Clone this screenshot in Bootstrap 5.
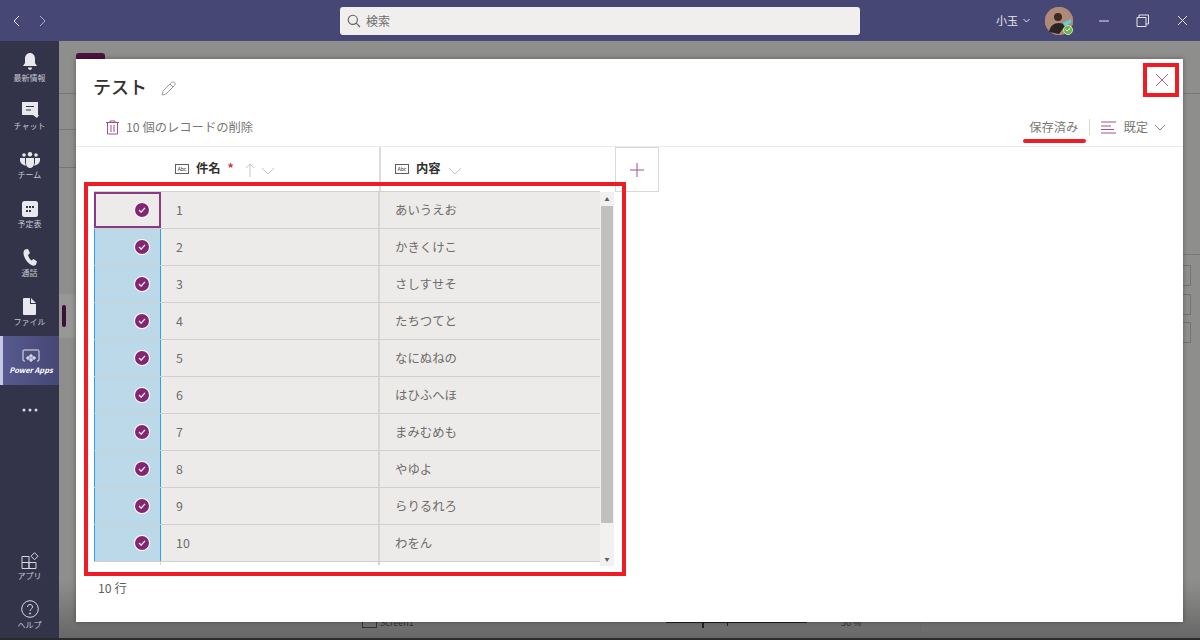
<!DOCTYPE html>
<html lang="ja">
<head>
    <meta charset="UTF-8">
    <title>テスト</title>
    <link rel="stylesheet" href="https://cdn.jsdelivr.net/npm/bootstrap@5.3.0/dist/css/bootstrap.min.css">
    <style>
        html, body { height: 640px; overflow: hidden; }
        body { font-family: "Noto Sans CJK JP", "Noto Sans", sans-serif; font-size: 12px; color: #605e5c; position: relative; background: #8a8a89; }
        .topbar { height: 41px; background: #464775; color: #e6e6ef; }
        .nav-arrows { width: 59px; padding-left: 12px; gap: 15px; }
        .search-wrap { width: 520px; height: 28px; margin-left: 281px; background: #f0efee; border-radius: 3px; padding-left: 7px; color: #6f6e6c; font-size: 12px; gap: 5px; }
        .user { margin-left: auto; gap: 5px; font-size: 11px; }
        .avatar { width: 28px; height: 28px; border-radius: 50%; position: relative; background: #a98674; margin-left: 10px; margin-right: 25px; }
        .presence { position: absolute; right: 0; bottom: 0; width: 10px; height: 10px; border-radius: 50%; background: #6bb74a; border: 1px solid #cfe5b0; }
        .win-btns { gap: 28px; padding-right: 12px; }
        .win-min { margin-right: -2px; }
        .sidebar { width: 59px; background: #33344a; padding-top: 1px; color: #c8c8d2; }
        .rail { height: 49px; padding-top: 2px; font-size: 8px; line-height: 10px; gap: 2px; }
        .rail.active { background: linear-gradient(90deg, #565a8e, #464775); border-left: 3px solid #c5c7e6; color: #fff; font-style: italic; font-weight: 600; font-size: 7.500px; }
        .rail-dots { height: 50px; color: #d8d8e0; }
        .rail-apps { margin-bottom: -1px; }
        .rail-help { margin-bottom: 2px; }
        .behind { background: linear-gradient(#8e8e8c 90%, #666); position: relative; }
        .back-tab { position: absolute; left: 76px; top: 53px; width: 29px; height: 8px; background: #4a1340; border-radius: 3px 3px 0 0; }
        .back-mark { position: absolute; left: 62px; top: 305px; width: 4px; height: 22px; background: #3e1036; border-radius: 2px; }
        .back-row { position: absolute; left: 59px; top: 294px; width: 17px; height: 44px; background: #979796; }
        .back-hline { position: absolute; left: 59px; width: 17px; height: 1px; background: #777; }
        .back-box { position: absolute; left: 1183px; width: 8px; height: 21px; border: 1px solid #737373; border-left: 0; }
        .back-foot { position: absolute; left: 59px; right: 0; top: 612px; height: 26px; color: #333; font-size: 9px; line-height: 12px; }
        .back-foot span { position: absolute; }
        .black-line { position: absolute; left: 0; right: 0; top: 638px; height: 2px; background: #2b2b2b; }
        .dialog { position: absolute; left: 76px; top: 59px; width: 1107px; height: 563px; background: #fff; box-shadow: 0 0 5px rgba(0,0,0,.35); }
        .dlg-title { height: 58px; padding: 14px 0 0 17px; font-size: 18px; font-weight: 500; color: #323130; gap: 14px; }
        .cmdbar { height: 20px; padding: 0 17px 0 30px; font-size: 12.300px; color: #797775; gap: 7px; }
        .saved { margin-left: auto; }
        .sep { width: 1px; height: 16px; background: #d8d8d8; margin: 0 4px; }
        .hdr { height: 46px; margin-top: 9px; border-top: 1px solid #edebe9; color: #323130; font-size: 12.300px; font-weight: 700; }
        .hdr-gutter { width: 85px; }
        .hdr-cell { gap: 7px; padding-top: 12px; align-items: flex-start; height: 44px; }
        .hdr-name { width: 220px; padding-left: 14px; border-right: 2px solid #dcdcdc; }
        .hdr-content { width: 234px; padding-left: 14px; }
        .add-col { width: 44px; height: 45px; border: 1px solid #d9d9d9; color: #a4508f; }
        .abc { width: 14px; height: 10px; margin-top: 5px; border: 1px solid #605e5c; font-size: 5px; line-height: 8px; text-align: center; font-weight: 400; }
        .req { color: #d13438; }
        .sort-down { margin-left: -1px; }
        .grid-wrap { margin: -1px 0 0 18px; width: 520px; position: relative; }
        .grid-body { width: 506px; }
        .g-row { height: 37px; background: #edebe9; border-top: 1px solid #d2d0ce; font-size: 12.400px; color: #6e6c6a; }
        .g-row.last { border-bottom: 1px solid #d2d0ce; height: 38px; }
        .g-check { width: 67px; height: 100%; background: #bcd9ea; border-left: 1px solid #2aa0f0; border-right: 1px solid #2aa0f0; padding-right: 11px; justify-content: flex-end; }
        .g-row.focus .g-check { background: #edebe9; border: 2px solid #8a3a82; padding-right: 10px; }
        .check { width: 14px; height: 14px; border-radius: 50%; background: #842472; box-shadow: 0 0 0 1px #fff; }
        .g-name { width: 219px; padding-left: 15px; height: 100%; border-right: 2px solid #d6d6d6; }
        .g-content { width: 220px; padding-left: 15px; }
        .g-tail { height: 3px; padding-left: 66px; }
        .g-tail span { width: 220px; border-left: 1px solid #d6d6d6; border-right: 2px solid #d6d6d6; }
        .scroll { position: absolute; left: 506px; top: 1px; width: 14px; height: 374px; background: #f1f1f1; }
        .thumb { height: 317px; width: 12px; background: #c0c0c0; margin: 0 auto; }
        .arrow { height: 14px; font-size: 5px; color: #606060; line-height: 14px; }
        .arrow-end { margin-top: 29px; }
        .dlg-foot { padding: 14px 0 0 22px; font-size: 12.300px; color: #605e5c; }
        .anno { position: absolute; border: 4px solid #ee1c25; }
        .anno-grid { left: 84px; top: 182px; width: 542px; height: 394px; }
        .anno-x { left: 1143px; top: 63px; width: 36px; height: 34px; }
        .anno-line { position: absolute; left: 1023px; top: 139px; width: 63px; height: 4px; background: #ee1c25; border-radius: 2px; }
        .x-btn { position: absolute; left: 1155px; top: 73px; }
    </style>
</head>
<body>
    <!-- タイトルバー -->
    <div class="topbar d-flex align-items-center">
        <div class="nav-arrows d-flex">
            <svg width="10" height="12" viewBox="0 0 10 12" fill="none" stroke="#e6e6ef"><path d="M7 1 2 6l5 5"/></svg>
            <svg width="10" height="12" viewBox="0 0 10 12" fill="none" stroke="#a9a9c8"><path d="M3 1l5 5-5 5"/></svg>
        </div>
        <div class="search-wrap d-flex align-items-center">
            <svg width="14" height="14" viewBox="0 0 14 14" fill="none" stroke="#605e5c" stroke-width="1.1"><circle cx="5.8" cy="5.8" r="4.6"/><path d="M9.2 9.2 13 13"/></svg>
            <span>検索</span>
        </div>
        <div class="user d-flex align-items-center">
            <span>小玉</span>
            <svg width="7" height="5" viewBox="0 0 7 5" fill="none" stroke="#e6e6ef"><path d="M.5 1l3 3 3-3"/></svg>
            <div class="avatar">
                <svg width="28" height="28" viewBox="0 0 28 28"><circle cx="14" cy="14" r="14" fill="#b08a78"/><path d="M4 25c1-6 5-9 10-9 3 0 5 1 6 3l-6 8z" fill="#2a2422"/><circle cx="13" cy="10" r="4" fill="#3a2a22"/><path d="M18 16l8-4v4l-7 3z" fill="#5fd0de"/></svg>
                <span class="presence d-flex align-items-center justify-content-center"><svg width="6" height="5" viewBox="0 0 6 5" fill="none" stroke="#fff"><path d="M.5 2.500l1.500 1.500L5.500 1"/></svg></span>
            </div>
        </div>
        <div class="win-btns d-flex align-items-center">
            <svg class="win-min" width="12" height="12" viewBox="0 0 12 12" stroke="#e6e6ef"><path d="M1 6h10"/></svg>
            <svg width="13" height="13" viewBox="0 0 13 13" fill="none" stroke="#e6e6ef"><path d="M1 3.500h9v9H1zM3 3.500V1h9.500v9H10"/></svg>
            <svg width="11" height="11" viewBox="0 0 11 11" stroke="#e6e6ef"><path d="M1 1l9 9M10 1l-9 9"/></svg>
        </div>
    </div>

    <div class="d-flex" style="height:599px">
        <!-- 左レール -->
        <div class="sidebar d-flex flex-column">
            <div class="rail d-flex flex-column align-items-center justify-content-center">
                <svg width="16" height="18" viewBox="0 0 16 18" fill="#e8e8ee"><path d="M8 0c3 0 5 2.500 5 6v4l2 3H1l2-3V6c0-3.500 2-6 5-6zM6 14.500h4c0 1.500-1 2.500-2 2.500s-2-1-2-2.500z"/></svg>
                <span>最新情報</span>
            </div>
            <div class="rail d-flex flex-column align-items-center justify-content-center">
                <svg width="18" height="17" viewBox="0 0 18 17"><path d="M1 0h16v13h1l-2 3-4-3H1z" fill="#e8e8ee"/><path d="M5 4.500h8M5 8h5" stroke="#33344a" stroke-width="1.200"/></svg>
                <span>チャット</span>
            </div>
            <div class="rail d-flex flex-column align-items-center justify-content-center">
                <svg width="20" height="16" viewBox="0 0 20 16" fill="#e8e8ee"><circle cx="10" cy="2.200" r="2.200"/><circle cx="4" cy="3" r="1.800"/><circle cx="16" cy="3" r="1.800"/><path d="M0 6h5v5l1 2.500C3 13.500 0 11 0 8zM20 6h-5v5l-1 2.500c3 0 6-2.500 6-5.500z"/><path d="M6 6h8v6c0 2-2 4-4 4s-4-2-4-4z"/></svg>
                <span>チーム</span>
            </div>
            <div class="rail d-flex flex-column align-items-center justify-content-center">
                <svg width="16" height="16" viewBox="0 0 16 16"><rect width="16" height="16" y="0" rx="2.500" fill="#e8e8ee"/><path d="M4 5h2v2H4zM7 5h2v2H7zM10 5h2v2h-2zM4 9h2v2H4zM7 9h2v2H7z" fill="#33344a"/></svg>
                <span>予定表</span>
            </div>
            <div class="rail d-flex flex-column align-items-center justify-content-center">
                <svg width="14" height="17" viewBox="0 0 14 17" fill="#e8e8ee"><path d="M2 .500 5 0l2 4-2 2c.5 2 2 4.500 3.500 5.500l2-1.500 3.500 2.500-1 3c-1 1.500-3 1.500-4.500.500C4 14 .5 8 .5 4 .5 2.500 1 1 2 .500z"/></svg>
                <span>通話</span>
            </div>
            <div class="rail d-flex flex-column align-items-center justify-content-center">
                <svg width="13" height="17" viewBox="0 0 13 17" fill="#e8e8ee"><path d="M1 0h6v6h6v10a1 1 0 0 1-1 1H1a1 1 0 0 1-1-1V1a1 1 0 0 1 1-1zM8 0l5 5H8z"/></svg>
                <span>ファイル</span>
            </div>
            <div class="rail active d-flex flex-column align-items-center justify-content-center">
                <svg width="18" height="14" viewBox="0 0 18 14" fill="none" stroke="#e8e8ee"><path d="M3 12H2a1 1 0 0 1-1-1V2a1 1 0 0 1 1-1h14a1 1 0 0 1 1 1v9a1 1 0 0 1-1 1h-1"/><g fill="#fff" stroke="none"><path d="M6 7l2 2-2 2-2-2zM12 7l2 2-2 2-2-2zM9 5l2 2-2 2-2-2zM9 9l2 2-2 2-2-2z"/></g><g fill="#4d4f80" stroke="none"><circle cx="6" cy="9" r=".6"/><circle cx="12" cy="9" r=".6"/><circle cx="9" cy="7" r=".6"/><circle cx="9" cy="11" r=".6"/></g></svg>
                <span>Power Apps</span>
            </div>
            <div class="rail-dots d-flex align-items-center justify-content-center">
                <svg width="16" height="4" viewBox="0 0 16 4" fill="#d8d8e0"><circle cx="2" cy="2" r="1.500"/><circle cx="8" cy="2" r="1.500"/><circle cx="14" cy="2" r="1.500"/></svg>
            </div>
            <div class="rail rail-apps d-flex flex-column align-items-center justify-content-center mt-auto">
                <svg width="18" height="17" viewBox="0 0 18 17" fill="none" stroke="#d8d8e0"><path d="M1 4.500h7v6H1zM1 10.500h7v6H1zM8 10.500h7v6H8z"/><path d="M13.500.700l3.500 3.500-3.500 3.500L10 4.200z"/></svg>
                <span>アプリ</span>
            </div>
            <div class="rail rail-help d-flex flex-column align-items-center justify-content-center">
                <svg width="18" height="18" viewBox="0 0 18 18" fill="none" stroke="#d8d8e0"><circle cx="9" cy="9" r="8.300"/><path d="M6.500 7c0-1.500 1-2.500 2.500-2.500S11.500 5.500 11.500 7c0 2-2.500 2-2.500 4"/><circle cx="9" cy="13.500" r=".6" fill="#d8d8e0"/></svg>
                <span>ヘルプ</span>
            </div>
        </div>
        <div class="behind flex-grow-1"></div>
    </div>

    <!-- ダイアログの後ろの画面 -->
    <div class="back-hline" style="top:93px"></div>
    <div class="back-hline" style="top:129px"></div>
    <div class="back-hline" style="top:167px"></div>
    <div class="back-hline" style="top:93px;left:1183px"></div>
    <div class="back-hline" style="top:254px;left:1183px"></div>
    <div class="back-row"></div>
    <div class="back-mark"></div>
    <div class="back-tab"></div>
    <div class="back-box" style="top:265px"></div>
    <div class="back-box" style="top:294px"></div>
    <div class="back-box" style="top:322px"></div>
    <div class="back-foot">
        <span style="left:303px;top:4px;width:15px;height:12px;border:1px solid #333"></span>
        <span style="left:321px;top:5px">Screen1</span>
        <span style="left:607px;top:10px;width:141px;height:1px;background:#222"></span>
        <span style="left:643px;top:10px;width:2px;height:6px;background:#222"></span>
        <span style="left:668px;top:10px;width:1px;height:4px;background:#222"></span>
        <span style="left:782px;top:5px">50 %</span>
        <span style="left:861px;top:0;width:1px;height:26px;background:#6a6a6a"></span>
    </div>
    <div class="black-line"></div>

    <!-- ダイアログ -->
    <div class="dialog d-flex flex-column">
        <div class="dlg-title d-flex align-items-start">
            <span>テスト</span>
            <svg class="mt-2" width="15" height="15" viewBox="0 0 15 15" fill="none" stroke="#a19f9d"><path d="M1 14l1-4L10.500 1.500a1.500 1.500 0 0 1 3 3L5 13z M9 3l3 3"/></svg>
        </div>
        <div class="cmdbar d-flex align-items-center">
            <svg width="13" height="15" viewBox="0 0 13 15" fill="none" stroke="#a4508f"><path d="M0 2.500h13M4 2.500V1h5v1.500M1.500 2.500V14h10V2.500M5 5v7M8 5v7"/></svg>
            <span>10 個のレコードの削除</span>
            <span class="saved">保存済み</span>
            <span class="sep"></span>
            <svg width="15" height="13" viewBox="0 0 15 13" stroke="#a4508f"><path d="M0 1h15M0 5h10M0 8.500h13M0 12h15"/></svg>
            <span>既定</span>
            <svg width="12" height="7" viewBox="0 0 12 7" fill="none" stroke="#8a8886" style="margin-left:-1px"><path d="M1 1l5 5 5-5"/></svg>
        </div>
        <div class="hdr d-flex">
            <div class="hdr-gutter"></div>
            <div class="hdr-cell hdr-name d-flex">
                <span class="abc">Abc</span>
                <span>件名</span><span class="req">*</span>
                <svg class="mt-1 ms-1" width="10" height="14" viewBox="0 0 10 14" fill="none" stroke="#c8c6c4"><path d="M5 14V1M1 5l4-4 4 4"/></svg>
                <svg class="mt-2 sort-down" width="14" height="8" viewBox="0 0 14 8" fill="none" stroke="#c8c6c4"><path d="M1 1l6 6 6-6"/></svg>
            </div>
            <div class="hdr-cell hdr-content d-flex">
                <span class="abc">Abc</span>
                <span>内容</span>
                <svg class="mt-2" width="14" height="8" viewBox="0 0 14 8" fill="none" stroke="#c8c6c4"><path d="M1 1l6 6 6-6"/></svg>
            </div>
            <div class="add-col d-flex align-items-center justify-content-center">
                <svg width="14" height="14" viewBox="0 0 14 14" stroke="#a4508f"><path d="M0 7h14M7 0v14"/></svg>
            </div>
        </div>
        <div class="grid-wrap">
            <div class="grid-body" id="rows"></div>
            <div class="g-tail d-flex"><span></span></div>
            <div class="scroll">
                <div class="arrow text-center">▲</div>
                <div class="thumb"></div>
                <div class="arrow arrow-end text-center">▼</div>
            </div>
        </div>
        <div class="dlg-foot">10 行</div>
    </div>

    <!-- 注釈 -->
    <div class="anno anno-grid"></div>
    <div class="anno anno-x"></div>
    <div class="anno-line"></div>
    <svg class="x-btn" width="14" height="14" viewBox="0 0 14 14" stroke="#b455a5"><path d="M1 1l12 12M13 1 1 13"/></svg>

    <script>
        var filas = ['あいうえお','かきくけこ','さしすせそ','たちつてと','なにぬねの','はひふへほ','まみむめも','やゆよ','らりるれろ','わをん'];
        var html = '';
        filas.forEach(function (texto, i) {
            var clase = i === 0 ? ' focus' : (i === filas.length - 1 ? ' last' : '');
            html += '<div class="g-row d-flex align-items-center' + clase + '">' +
                '<div class="g-check d-flex align-items-center"><span class="check d-flex align-items-center justify-content-center">' +
                '<svg width="8" height="6" viewBox="0 0 9 7" fill="none" stroke="#fff" stroke-width="1.500"><path d="M1 3.500l2.500 2.500L8 1"/></svg></span></div>' +
                '<div class="g-name d-flex align-items-center">' + (i + 1) + '</div>' +
                '<div class="g-content">' + texto + '</div></div>';
        });
        document.getElementById('rows').innerHTML = html;
    </script>
    <script src="https://cdn.jsdelivr.net/npm/bootstrap@5.3.0/dist/js/bootstrap.bundle.min.js"></script>
</body>
</html>
